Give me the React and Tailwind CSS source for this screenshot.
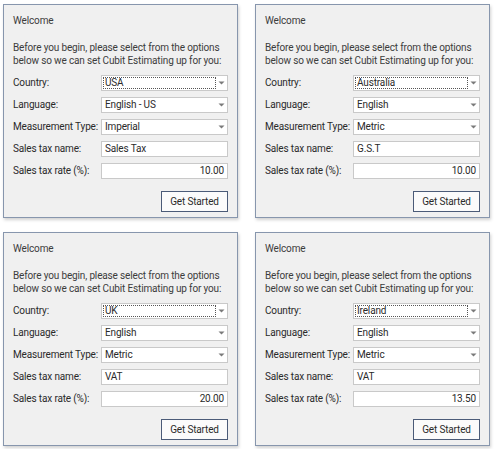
import React from "react";

const panels = [
  { country: "USA", language: "English - US", measure: "Imperial", taxName: "Sales Tax", rate: "10.00" },
  { country: "Australia", language: "English", measure: "Metric", taxName: "G.S.T", rate: "10.00" },
  { country: "UK", language: "English", measure: "Metric", taxName: "VAT", rate: "20.00" },
  { country: "Ireland", language: "English", measure: "Metric", taxName: "VAT", rate: "13.50" },
];

function Arrow() {
  return (
    <svg width="7" height="4" viewBox="0 0 7 4" className="shrink-0">
      <path d="M0.5 0.5 L6.5 0.5 L3.5 3.5 Z" fill="#7a7a7a" />
    </svg>
  );
}

function Combo({ value, focused }) {
  return (
    <div className="flex h-[16px] w-[127px] items-center border border-[#c9c9c9] bg-white">
      {focused ? (
        <div className="ml-px flex h-[12px] w-[113px] items-center border border-dotted border-[#555] pl-[1px] leading-none">
          {value}
        </div>
      ) : (
        <div className="flex w-[114px] items-center pl-[3px] leading-none">{value}</div>
      )}
      <div className="flex flex-1 items-center justify-center pr-px">
        <Arrow />
      </div>
    </div>
  );
}

function TextBox({ value, right }) {
  return (
    <div
      className={
        "flex h-[16px] w-[127px] items-center border border-[#c9c9c9] bg-white px-[3px] leading-none " +
        (right ? "justify-end" : "")
      }
    >
      {value}
    </div>
  );
}

function Row({ label, children }) {
  return (
    <div className="flex h-[16px] items-center">
      <div className="w-[88px] shrink-0 whitespace-nowrap leading-none">{label}</div>
      {children}
    </div>
  );
}

function Panel({ p }) {
  return (
    <div className="flex h-[214px] w-[235px] flex-col border border-[#8796ad] bg-[#f0f0f0] pl-[9px] pr-[9px] pt-[8px] text-[10px] tracking-[-0.15px] text-[#3c3c3c] shadow-[1px_2px_3px_rgba(0,0,0,0.18)] [font-family:Roboto,sans-serif]">
      <div className="h-[16px] leading-[16px]">Welcome</div>
      <div className="mt-[12px] whitespace-nowrap leading-[13px]">
        Before you begin, please select from the options
        <br />
        below so we can set Cubit Estimating up for you:
      </div>
      <div className="mt-[8px] flex flex-col gap-[6px] text-[#2a2a2a]">
        <Row label="Country:">
          <Combo value={p.country} focused />
        </Row>
        <Row label="Language:">
          <Combo value={p.language} />
        </Row>
        <Row label="Measurement Type:">
          <Combo value={p.measure} />
        </Row>
        <Row label="Sales tax name:">
          <TextBox value={p.taxName} />
        </Row>
        <Row label="Sales tax rate (%):">
          <TextBox value={p.rate} right />
        </Row>
      </div>
      <div className="mt-[12px] flex justify-end">
        <div className="flex h-[21px] w-[67px] items-center justify-center border border-[#4b5b78] bg-[#fbfbfb] leading-none text-[#2a2a2a]">
          Get Started
        </div>
      </div>
    </div>
  );
}

export default function App() {
  return (
    <div className="h-[449px] w-[494px] bg-white">
      <div className="grid grid-cols-[235px_235px] grid-rows-[214px_214px] gap-x-[17px] gap-y-[14px] pl-[3px] pt-[4px]">
        {panels.map((p, i) => (
          <Panel key={i} p={p} />
        ))}
      </div>
    </div>
  );
}
